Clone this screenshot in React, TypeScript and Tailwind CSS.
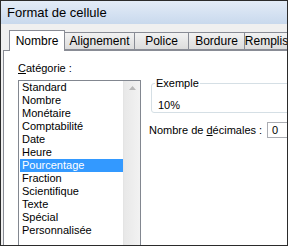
import React from 'react';

// Onglets de la boîte de dialogue
const TABS = [
  { label: 'Nombre', width: 'w-[56px]' },
  { label: 'Alignement', width: 'w-[70px]' },
  { label: 'Police', width: 'w-[54px]' },
  { label: 'Bordure', width: 'w-[56px]' },
  { label: 'Remplissage', width: 'w-[70px]' },
];

// Catégories de format
const CATEGORIES = [
  'Standard',
  'Nombre',
  'Monétaire',
  'Comptabilité',
  'Date',
  'Heure',
  'Pourcentage',
  'Fraction',
  'Scientifique',
  'Texte',
  'Spécial',
  'Personnalisée',
];

const SELECTED = 'Pourcentage';

export default function App() {
  return (
    <div className="w-[288px] h-[246px] overflow-hidden border border-[#2b2b2b] bg-[#f0f0f0] flex flex-col font-['Liberation_Sans',sans-serif] text-[11px] text-black">
      {/* barre de titre */}
      <div className="h-[23px] shrink-0 flex items-center px-[6px] bg-gradient-to-b from-[#e3ecf7] to-[#c9d9ed] text-[13px] whitespace-nowrap">
        Format de cellule
      </div>

      <div className="flex-1 flex flex-col pl-[2px] pt-[6px]">
        {/* onglets */}
        <div className="flex items-end h-[20px] pl-[6px] whitespace-nowrap text-[12px]">
          {TABS.map((tab, i) =>
            i === 0 ? (
              <div
                key={tab.label}
                className={`${tab.width} h-[21px] -mb-px shrink-0 flex items-center justify-center border border-b-0 border-[#898c95] bg-white relative z-10`}
              >
                {tab.label}
              </div>
            ) : (
              <div
                key={tab.label}
                className={`${tab.width} h-[18px] shrink-0 flex items-center justify-center border border-l-0 border-[#898c95] bg-gradient-to-b from-[#f2f2f2] to-[#dcdcdc]`}
              >
                {tab.label}
              </div>
            )
          )}
        </div>

        {/* panneau */}
        <div className="flex-1 flex border-l border-t border-[#898c95] bg-white pl-[14px] pt-[10px] whitespace-nowrap">
          <div className="flex flex-col w-[123px] shrink-0">
            <div className="h-[14px] leading-[14px]">
              <span className="underline underline-offset-[1px]">C</span>atégorie :
            </div>
            <div className="mt-[5px] flex-1 flex border border-b-0 border-[#828790]">
              <div className="flex-1 flex flex-col pl-px">
                {CATEGORIES.map((c) => (
                  <div
                    key={c}
                    className={`h-[13px] leading-[13px] pl-[2px] ${c === SELECTED ? 'bg-[#3399ff] text-white' : ''}`}
                  >
                    {c}
                  </div>
                ))}
              </div>
              {/* barre de défilement */}
              <div className="w-[17px] shrink-0 bg-gradient-to-r from-[#e8e8e8] to-[#f2f2f2] border-l border-[#e4e4e4] flex justify-center pt-[5px]">
                <svg width="7" height="4" viewBox="0 0 7 4">
                  <path d="M0 4 L3.5 0 L7 4 Z" fill="#b8b8b8" />
                </svg>
              </div>
            </div>
          </div>

          <div className="flex flex-col shrink-0 pl-[8px] pt-[22px]">
            {/* groupe exemple */}
            <div className="relative ml-[2px] w-[160px] h-[30px] border border-[#d5dfe5] rounded-[3px] pl-[6px] pt-[13px]">
              <span className="absolute -top-[7px] left-[3px] bg-white px-px leading-[13px]">Exemple</span>
              10%
            </div>
            <div className="mt-[9px] flex items-center">
              <span className="w-[118px] shrink-0">
                Nombre de <span className="underline underline-offset-[1px]">d</span>écimales :
              </span>
              <div className="w-[40px] h-[16px] shrink-0 border border-[#abadb3] pl-[4px] leading-[14px]">0</div>
            </div>
          </div>
        </div>
      </div>
    </div>
  );
}
